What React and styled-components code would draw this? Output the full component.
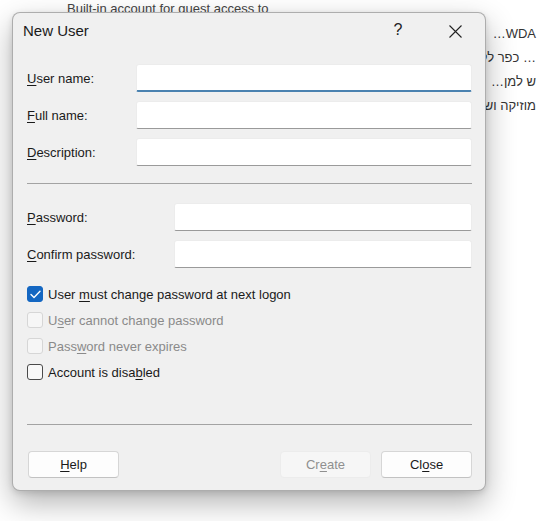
import React from "react";
import styled, { createGlobalStyle } from "styled-components";

const GlobalStyle = createGlobalStyle`
  * { box-sizing: border-box; }
  html, body {
    margin: 0;
    padding: 0;
    background: #ffffff;
    font-family: "Liberation Sans", Arial, sans-serif;
  }
`;

const Page = styled.div`
  position: relative;
  width: 539px;
  height: 521px;
  overflow: hidden;
  background: #ffffff;
  color: #3b3b3b;
  font-size: 13px;
`;

const BackLine = styled.div`
  margin: 1px 0 0 67px;
  line-height: 16px;
  color: #444;
`;

// list rows behind the dialog, right edge of the window cuts them
const SideColumn = styled.div`
  margin-top: 5px;
  padding-right: 3px;
  text-align: right;
  line-height: 24px;
  color: #333;
  font-family: "Liberation Sans", "DejaVu Sans", sans-serif;
  white-space: nowrap;
`;

const Dialog = styled.div`
  position: absolute;
  left: 12px;
  top: 12px;
  width: 474px;
  background: #f0f0f0;
  border: 1px solid rgba(0, 0, 0, 0.28);
  border-radius: 8px;
  box-shadow: 0 12px 30px rgba(0, 0, 0, 0.3), 0 2px 6px rgba(0, 0, 0, 0.12);
  color: #1a1a1a;
  font-size: 13px;
`;

const TitleBar = styled.div`
  height: 38px;
  display: flex;
  align-items: center;
  padding: 0 7px 4px 10px;
`;

const Title = styled.div`
  flex: 1;
  font-size: 15px;
  color: #1a1a1a;
`;

const TitleButton = styled.div`
  width: 46px;
  height: 30px;
  display: flex;
  align-items: center;
  justify-content: center;
  margin-left: ${(p) => p.$gap || 0}px;
  margin-top: ${(p) => p.$drop || 0}px;
  font-size: 16px;
  color: #222;
`;

const Body = styled.div`
  padding: 13px 13px 12px 14px;
`;

const FieldGroup = styled.div`
  display: flex;
  flex-direction: column;
  gap: 9px;
`;

const FieldRow = styled.div`
  display: grid;
  grid-template-columns: ${(p) => p.$label}px 1fr;
  align-items: center;
  height: 28px;
`;

const Label = styled.label`
  color: #1a1a1a;
  u { text-underline-offset: 2px; }
`;

const Input = styled.div`
  height: 28px;
  background: #ffffff;
  border: 1px solid #ececec;
  border-bottom: ${(p) => (p.$focused ? "2px solid #4a82b0" : "1px solid #9a9a9a")};
  border-radius: 3px 3px 2px 2px;
`;

const Separator = styled.div`
  height: 1px;
  background: #a3a3a3;
  margin-top: ${(p) => p.$top}px;
  margin-bottom: ${(p) => p.$bottom || 0}px;
`;

const CheckList = styled.div`
  margin-top: 13px;
  display: flex;
  flex-direction: column;
`;

const CheckRow = styled.div`
  height: 26px;
  display: flex;
  align-items: center;
  gap: 5px;
  color: ${(p) => (p.$disabled ? "#8a8a8a" : "#1a1a1a")};
  u { text-underline-offset: 2px; }
`;

const Box = styled.div`
  width: 16px;
  height: 16px;
  border-radius: 3px;
  display: flex;
  align-items: center;
  justify-content: center;
  background: ${(p) => (p.$checked ? "#1467c2" : p.$disabled ? "#f6f6f6" : "#f8f8f8")};
  border: 1px solid
    ${(p) => (p.$checked ? "#1467c2" : p.$disabled ? "#d6d6d6" : "#4a4a4a")};
`;

const ButtonBar = styled.div`
  display: flex;
  align-items: center;
  gap: 10px;
  margin-top: 26px;
`;

const Spacer = styled.div`
  flex: 1;
`;

const Button = styled.div`
  width: 91px;
  height: 27px;
  display: flex;
  align-items: center;
  justify-content: center;
  border-radius: 4px;
  margin-left: ${(p) => p.$indent || 0}px;
  background: ${(p) => (p.$disabled ? "#f6f6f6" : "#fdfdfd")};
  border: 1px solid ${(p) => (p.$disabled ? "#ececec" : "#d6d6d6")};
  border-bottom-color: ${(p) => (p.$disabled ? "#ececec" : "#c2c2c2")};
  color: ${(p) => (p.$disabled ? "#8f8f8f" : "#1a1a1a")};
  u { text-underline-offset: 2px; }
`;

const CheckMark = () => (
  <svg width="11" height="9" viewBox="0 0 11 9">
    <path d="M1 4.6 L4 7.5 L10 1.3" fill="none" stroke="#fff" strokeWidth="1.4" strokeLinecap="round" strokeLinejoin="round" />
  </svg>
);

const CloseIcon = () => (
  <svg width="13" height="13" viewBox="0 0 13 13">
    <path d="M0.5 0.5 L12.5 12.5 M12.5 0.5 L0.5 12.5" stroke="#222" strokeWidth="1.1" />
  </svg>
);

const Check = ({ checked, disabled, children }) => (
  <CheckRow $disabled={disabled}>
    <Box $checked={checked} $disabled={disabled}>
      {checked && <CheckMark />}
    </Box>
    <span>{children}</span>
  </CheckRow>
);

export default function App() {
  return (
    <>
      <GlobalStyle />
      <Page>
        <BackLine>Built-in account for guest access to</BackLine>
        <SideColumn>
          <div>…WDA</div>
          <div>כפר לקוחות …</div>
          <div>…ש למן</div>
          <div>מוזיקה ושירים</div>
        </SideColumn>

        <Dialog>
          <TitleBar>
            <Title>New User</Title>
            <TitleButton>?</TitleButton>
            <TitleButton $gap={11} $drop={3}>
              <CloseIcon />
            </TitleButton>
          </TitleBar>

          <Body>
            <FieldGroup>
              <FieldRow $label={109}>
                <Label><u>U</u>ser name:</Label>
                <Input $focused />
              </FieldRow>
              <FieldRow $label={109}>
                <Label><u>F</u>ull name:</Label>
                <Input />
              </FieldRow>
              <FieldRow $label={109}>
                <Label><u>D</u>escription:</Label>
                <Input />
              </FieldRow>
            </FieldGroup>

            <Separator $top={17} $bottom={19} />

            <FieldGroup>
              <FieldRow $label={147}>
                <Label><u>P</u>assword:</Label>
                <Input />
              </FieldRow>
              <FieldRow $label={147}>
                <Label><u>C</u>onfirm password:</Label>
                <Input />
              </FieldRow>
            </FieldGroup>

            <CheckList>
              <Check checked>
                User <u>m</u>ust change password at next logon
              </Check>
              <Check disabled>
                U<u>s</u>er cannot change password
              </Check>
              <Check disabled>
                Pass<u>w</u>ord never expires
              </Check>
              <Check>
                Account is disa<u>b</u>led
              </Check>
            </CheckList>

            <Separator $top={39} />

            <ButtonBar>
              <Button $indent={1}><span><u>H</u>elp</span></Button>
              <Spacer />
              <Button $disabled><span>Cr<u>e</u>ate</span></Button>
              <Button><span>Cl<u>o</u>se</span></Button>
            </ButtonBar>
          </Body>
        </Dialog>
      </Page>
    </>
  );
}
